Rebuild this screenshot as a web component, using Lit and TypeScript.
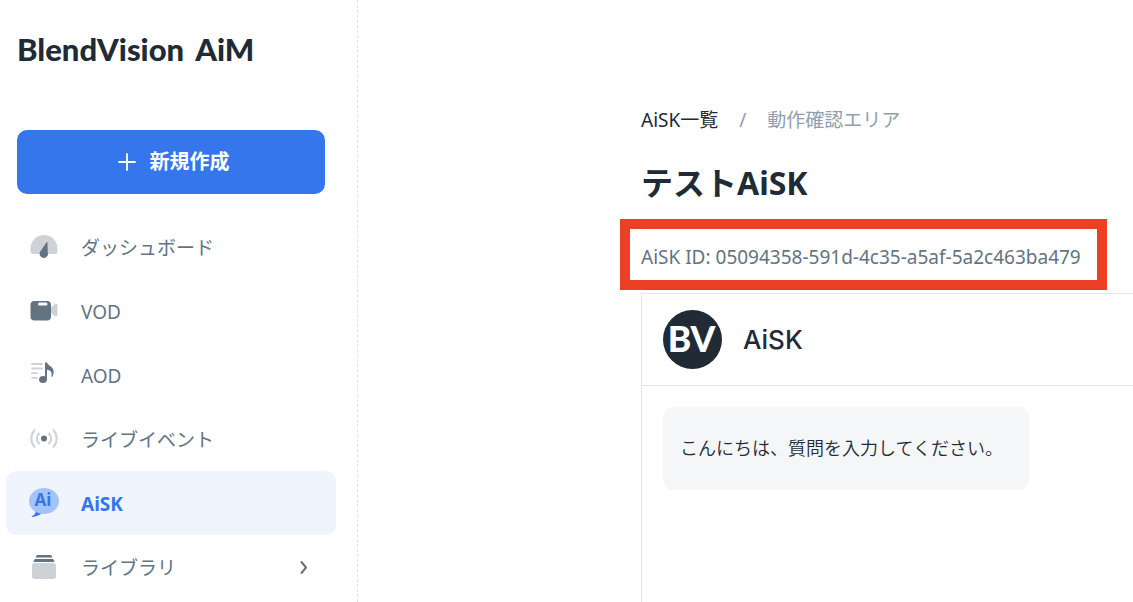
import { LitElement, html, css, svg, nothing } from "lit";
import { customElement, property } from "lit/decorators.js";
import { classMap } from "lit/directives/class-map.js";

const icons: Record<string, unknown> = {
  dashboard: svg`
    <path d="M3.900 22A2.400 2.400 0 0 1 1.500 19.600V16.500a13.500 13.500 0 0 1 27 0v3.100a2.400 2.400 0 0 1-2.400 2.400z" fill="#ced2d6"/>
    <path d="M17.300 10.700c.6-1.200 1.200-.9 1.200.3l.2 9.200a4.200 4.200 0 1 1-7.900.3c.2-.8.700-1.500 1.400-2.200z" fill="#637381"/>`,
  video: svg`
    <path d="M22 11.500l3.500-3.300c1.200-1 3-.4 3 1.200v9.400c0 1.600-1.800 2.200-3 1.200L22 16.800z" fill="#ced2d6"/>
    <rect x="1.500" y="5" width="20.500" height="19.500" rx="4" fill="#637381"/>
    <rect x="9" y="6.500" width="9.500" height="3" rx="1.500" fill="#fff"/>`,
  audio: svg`
    <path d="M3 4h10M3 8.500h10M3 13.200h5M3 17.800h5" stroke="#ced2d6" stroke-width="1.800" stroke-linecap="round"/>
    <ellipse cx="14" cy="19.500" rx="3.900" ry="3.500" fill="#637381"/>
    <path d="M16 2.500h2c.6 3.300 6.700 3.800 6.700 9.200 0 2-.6 3.800-1.600 5.300-1 0-.7-.9-.5-2.200.5-3.300-1.600-4.400-4.600-5V19.500H16z" fill="#637381"/>`,
  live: svg`
    <circle cx="15" cy="14.500" r="3" fill="#637381"/>
    <path d="M10 9.500a7 7 0 0 0 0 10M20 9.500a7 7 0 0 1 0 10M5.500 6.200a12.500 12.500 0 0 0 0 16.600M24.500 6.200a12.500 12.500 0 0 1 0 16.600" fill="none" stroke="#ced2d6" stroke-width="2" stroke-linecap="round"/>`,
  aisk: svg`
    <path d="M6.500 22.500c.4 2.400-.8 4.300-3 5.300-1.200.7-1 1.300.2 1.100 4.300-.5 7.300-2 9.600-4.400z" fill="#3576ed"/>
    <ellipse cx="15" cy="13" rx="15" ry="13" fill="#a6c3f8"/>
    <text x="14" y="18" text-anchor="middle" class="badge">Ai</text>`,
  library: svg`
    <path d="M7 4.500C7.500 3.200 8 3 9 3h12c1 0 1.500.2 2 1.500l.3 1H6.700zM4.800 9c.4-1.500 1-2 2-2h16.400c1 0 1.600.5 2 2l.2.900H4.600z" fill="#637381"/>
    <rect x="3" y="11" width="24" height="16" rx="2.500" fill="#ced2d6"/>`,
};

@customElement("nav-item")
export class NavItem extends LitElement {
  @property() icon = "";
  @property() label = "";
  @property({ type: Boolean }) active = false;
  @property({ type: Boolean }) expandable = false;

  static styles = css`
    :host { display: block; }
    .item {
      display: flex;
      align-items: center;
      gap: 22px;
      height: 64px;
      box-sizing: border-box;
      padding: 0 24px 0 23px;
      border-radius: 10px;
      color: #637381;
      font-size: 19px;
      line-height: 28px;
      text-decoration: none;
    }
    .active { background: #eff4fd; color: #3576ed; font-weight: 700; }
    .icon { width: 30px; height: 30px; flex: none; overflow: visible; }
    .label { flex: 1; padding-top: 1px; }
    .chevron { width: 16px; height: 16px; }
    .badge { font: 700 17px "Noto Sans", sans-serif; fill: #3576ed; }
  `;

  render() {
    return html`
      <a class=${classMap({ item: true, active: this.active })} href="#${this.icon}" aria-current=${this.active ? "page" : nothing}>
        <svg class="icon" viewBox="0 0 30 30" aria-hidden="true">${icons[this.icon]}</svg>
        <span class="label">${this.label}</span>
        ${this.expandable
          ? html`<svg class="chevron" viewBox="0 0 16 16" aria-hidden="true">
              <path d="M5.500 3L10 8.500 5.500 14" fill="none" stroke="#637381" stroke-width="2" stroke-linecap="round" stroke-linejoin="round"/>
            </svg>`
          : nothing}
      </a>`;
  }
}

@customElement("app-root")
export class AppRoot extends LitElement {
  static styles = css`
    :host {
      display: flex;
      min-height: 100vh;
      background: #fff;
      color: #212b36;
      font-family: "Noto Sans", "Noto Sans CJK JP", sans-serif;
      font-size: 19px;
      line-height: 28px;
    }
    .sidebar {
      flex: none;
      width: 358px;
      box-sizing: border-box;
      padding-top: 29px;
      border-right: 1px dashed #dfe3e8;
    }
    .brand {
      display: flex;
      gap: 11px;
      margin: 0 17px 61px;
      font: 900 31px/40px Lato, sans-serif;
    }
    .create {
      display: flex;
      align-items: center;
      justify-content: center;
      gap: 14px;
      width: calc(100% - 49px);
      height: 64px;
      margin: 0 32px 21px 17px;
      padding: 0 0 0 5px;
      border: 0;
      border-radius: 10px;
      background: #3576ed;
      color: #fff;
      font: inherit;
      font-size: 20px;
      font-weight: 700;
    }
    .plus { width: 18px; height: 18px; }
    .nav { padding: 0 21px 0 6px; }
    .main {
      flex: 1;
      min-width: 0;
      display: flex;
      flex-direction: column;
      padding: 106px 0 0 283px;
    }
    .crumbs { display: flex; gap: 21px; color: #919eab; }
    .crumbs a { color: #212b36; text-decoration: none; }
    .title { margin: 27px 0 14px; font-size: 32px; line-height: 44px; font-weight: 700; }
    .identifier {
      align-self: flex-start;
      margin: 0 0 3px -21px;
      padding: 14px 16px 9px 11px;
      border: 10px solid #eb4025;
      color: #637381;
      white-space: nowrap;
    }
    .chat { flex: 1; border: solid #e3e6e9; border-width: 1px 0 0 1px; }
    .chat-head {
      display: flex;
      align-items: center;
      gap: 21px;
      padding: 16px 21px;
      border-bottom: 1px solid #e3e6e9;
    }
    .avatar { width: 59px; height: 59px; }
    .monogram { font: 900 36px Lato, sans-serif; fill: #fff; }
    .chat-name { margin: 0; font: 500 26px/32px Inter, sans-serif; }
    .bubble {
      width: fit-content;
      margin: 21px;
      padding: 27px 26px 28px 17px;
      border-radius: 10px;
      background: #f4f6f8;
      font-size: 18px;
      font-weight: 350;
    }
  `;

  render() {
    return html`
      <aside class="sidebar">
        <div class="brand"><span>BlendVision</span><span>AiM</span></div>
        <button class="create" type="button">
          <svg class="plus" viewBox="0 0 18 18" aria-hidden="true"><path d="M9 1v16M1 9h16" stroke="#fff" stroke-width="1.800" stroke-linecap="round"/></svg>
          新規作成
        </button>
        <nav class="nav">
          <nav-item icon="dashboard" label="ダッシュボード"></nav-item>
          <nav-item icon="video" label="VOD"></nav-item>
          <nav-item icon="audio" label="AOD"></nav-item>
          <nav-item icon="live" label="ライブイベント"></nav-item>
          <nav-item icon="aisk" label="AiSK" active></nav-item>
          <nav-item icon="library" label="ライブラリ" expandable></nav-item>
        </nav>
      </aside>
      <main class="main">
        <nav class="crumbs"><a href="#aisk">AiSK一覧</a><span>/</span><span>動作確認エリア</span></nav>
        <h1 class="title">テストAiSK</h1>
        <p class="identifier">AiSK ID: 05094358-591d-4c35-a5af-5a2c463ba479</p>
        <section class="chat">
          <header class="chat-head">
            <svg class="avatar" viewBox="0 0 60 60" role="img" aria-label="BV">
              <circle cx="30" cy="30" r="30" fill="#212b36"/>
              <text x="29" y="43" text-anchor="middle" class="monogram">BV</text>
            </svg>
            <h2 class="chat-name">AiSK</h2>
          </header>
          <div class="bubble">こんにちは、質問を入力してください。</div>
        </section>
      </main>`;
  }
}
